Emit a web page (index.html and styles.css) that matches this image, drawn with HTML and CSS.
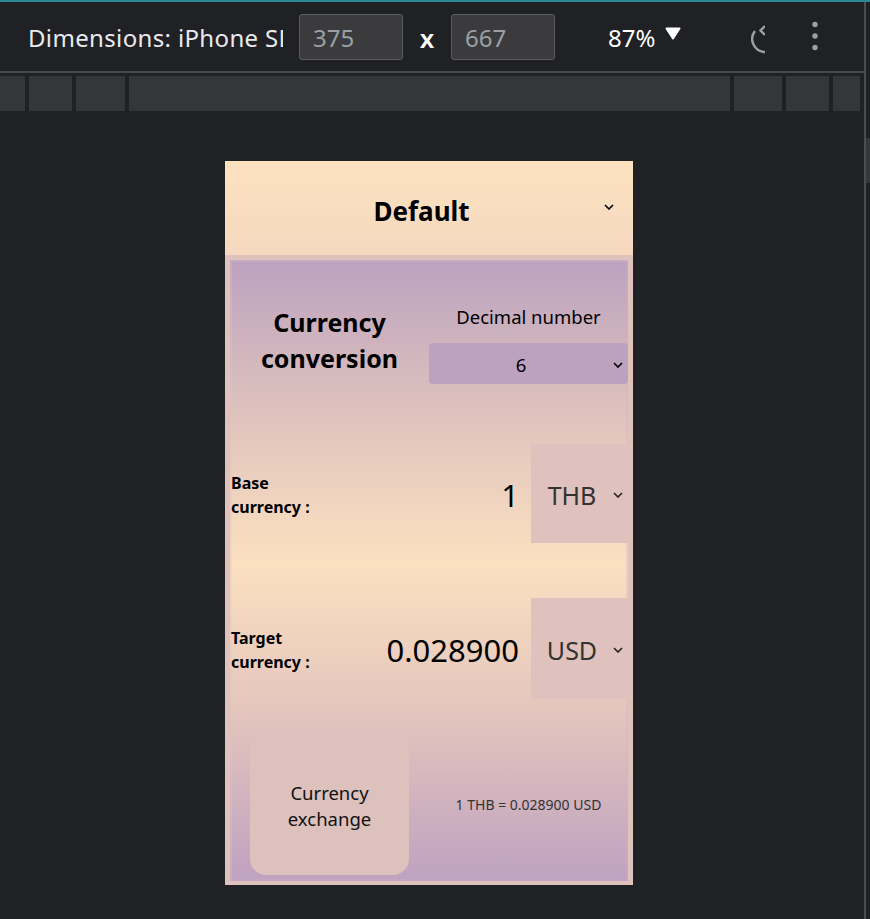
FILE: index.html
```html
<!DOCTYPE html>
<html lang="en">
<head>
<meta charset="utf-8">
<title>Currency conversion – device preview</title>
<link rel="stylesheet" href="styles.css">
</head>
<body>
<div class="frame">
  <div class="topline"></div>
  <div class="content">
    <div class="main">
      <div class="toolbar">
        <div class="dim-label">Dimensions: iPhone SE</div>
        <div class="num-box">375</div>
        <div class="times">x</div>
        <div class="num-box">667</div>
        <div class="zoom-level">87%</div>
        <svg class="zoom-caret" width="16" height="13" viewBox="0 0 16 13"><path d="M1.5 1.5 H14.5 L8 11.5 Z" fill="#ffffff" stroke="#ffffff" stroke-width="2" stroke-linejoin="round"/></svg>
        <div class="rotate-clip">
          <svg width="14" height="30" viewBox="0 0 14 30"><path d="M4 7 A13 13 0 0 0 14 28" fill="none" stroke="#9aa0a6" stroke-width="2.4"/><path d="M14 2 L9.5 6.5 L14 11" fill="none" stroke="#9aa0a6" stroke-width="2.4"/></svg>
        </div>
        <svg class="kebab" width="8" height="30" viewBox="0 0 8 30"><circle cx="4" cy="3.5" r="2.7" fill="#9aa0a6"/><circle cx="4" cy="15" r="2.7" fill="#9aa0a6"/><circle cx="4" cy="26.5" r="2.7" fill="#9aa0a6"/></svg>
      </div>
      <div class="sep"></div>
      <div class="ruler">
        <div class="seg w25"></div>
        <div class="seg w43"></div>
        <div class="seg w49"></div>
        <div class="seg w601"></div>
        <div class="seg w48"></div>
        <div class="seg w43"></div>
        <div class="seg w27"></div>
      </div>
      <div class="stage">
        <div class="phone">
          <header class="ph-head">
            <span class="ph-title">Default</span>
            <svg class="chev head-chev" width="10" height="6" viewBox="0 0 10 6"><polyline points="1,1 5,5 9,1" fill="none" stroke="#000" stroke-width="1.6"/></svg>
          </header>
          <div class="ph-body">
            <div class="panel">
              <div class="row-top">
                <h1 class="conv-title">Currency<br>conversion</h1>
                <div class="decimal">
                  <div class="dec-label">Decimal number</div>
                  <div class="dec-select">
                    <span class="sel-text">6</span>
                    <svg class="chev" width="10" height="6" viewBox="0 0 10 6"><polyline points="1,1 5,5 9,1" fill="none" stroke="#000" stroke-width="1.7"/></svg>
                  </div>
                </div>
              </div>
              <div class="cur-row base">
                <div class="cur-label">Base currency :</div>
                <div class="cur-value">1</div>
                <div class="cur-select">
                  <span class="sel-text">THB</span>
                  <svg class="chev" width="10" height="6" viewBox="0 0 10 6"><polyline points="1,1 5,5 9,1" fill="none" stroke="#222" stroke-width="1.6"/></svg>
                </div>
              </div>
              <div class="cur-row target">
                <div class="cur-label">Target currency :</div>
                <div class="cur-value">0.028900</div>
                <div class="cur-select">
                  <span class="sel-text">USD</span>
                  <svg class="chev" width="10" height="6" viewBox="0 0 10 6"><polyline points="1,1 5,5 9,1" fill="none" stroke="#222" stroke-width="1.6"/></svg>
                </div>
              </div>
              <div class="row-bottom">
                <div class="btn-cell"><div class="exchange-btn">Currency<br>exchange</div></div>
                <div class="rate">1 THB = 0.028900 USD</div>
              </div>
            </div>
          </div>
        </div>
      </div>
    </div>
    <div class="vline"></div>
    <div class="edge">
      <div class="edge-gap1"></div>
      <div class="edge-block"></div>
    </div>
  </div>
</div>
</body>
</html>
```

FILE: styles.css
```css
* { box-sizing: border-box; }

html, body {
  margin: 0;
  padding: 0;
  background: #202124;
  height: 100%;
  overflow: hidden;
}

body {
  font-family: "Noto Sans", "Open Sans", sans-serif;
}

.frame {
  display: flex;
  flex-direction: column;
  height: 919px;
}

.topline {
  height: 2px;
  background: #2e8a92;
  flex: none;
}

.content {
  display: flex;
  flex: 1;
}

.main {
  width: 864px;
  flex: none;
}

.vline {
  width: 2px;
  background: #4a4c50;
  flex: none;
}

.edge {
  width: 4px;
  flex: none;
  display: flex;
  flex-direction: column;
}

.edge-gap1 { height: 136px; }
.edge-block { height: 45px; background: #36373b; }

/* toolbar */
.toolbar {
  height: 69px;
  display: flex;
  align-items: center;
  color: #e8eaed;
  font-size: 24px;
}

.dim-label {
  margin-left: 28px;
  width: 255px;
  white-space: nowrap;
  overflow: hidden;
  letter-spacing: 0.35px;
  padding-top: 2px;
}

.num-box {
  margin-left: 16px;
  width: 104px;
  height: 46px;
  border: 1px solid #5b5d61;
  border-radius: 3px;
  background: #3b3b3d;
  color: #9aa0a6;
  padding-left: 13px;
  display: flex;
  align-items: center;
  padding-top: 2px;
}

.times + .num-box { margin-left: 0; }

.times {
  width: 48px;
  text-align: center;
  font-size: 26px;
  font-weight: 600;
  color: #ffffff;
  padding-top: 2px;
}

.zoom-level {
  margin-left: 53px;
  color: #ffffff;
  padding-top: 2px;
}

.zoom-caret {
  margin-left: 10px;
  margin-top: -6px;
}

.rotate-clip {
  margin-left: 70px;
  width: 14px;
  height: 30px;
  overflow: hidden;
  margin-top: 4px;
}

.kebab {
  margin-left: 46px;
  margin-top: -1px;
}

.sep {
  height: 2px;
  background: #46484c;
}

.ruler {
  margin-top: 3px;
  height: 35px;
  display: flex;
  gap: 4px;
}

.seg { background: #35363a; height: 35px; }
.w25 { width: 25px; }
.w43 { width: 43px; }
.w49 { width: 49px; }
.w601 { width: 601px; }
.w48 { width: 48px; }
.w27 { width: 27px; }

/* stage + phone */
.stage {
  padding-top: 50px;
  padding-left: 225px;
}

.phone {
  width: 408px;
  height: 724px;
  display: flex;
  flex-direction: column;
  color: #000;
}

.ph-head {
  position: relative;
  height: 94px;
  flex: none;
  background: linear-gradient(to bottom, #fde2c0, #f5d8bf);
  display: flex;
  align-items: center;
  justify-content: center;
  padding-right: 15px;
  padding-top: 5px;
}

.ph-title {
  font-size: 26px;
  font-weight: 700;
}

.chev {
  position: absolute;
  right: 5px;
  top: 50%;
  margin-top: -2px;
}

.head-chev {
  right: 19px;
  margin-top: -4px;
}

.ph-body {
  flex: 1;
  background: #dfc2bc;
  padding: 5px 5px 4px 5px;
  display: flex;
}

.panel {
  flex: 1;
  background: linear-gradient(to bottom, #bca2bf 0%, #e0c4bd 26%, #fce0c0 49%, #e4c6bd 72%, #bfa2c0 100%);
  box-shadow: inset 2px 2px 0 rgba(222, 194, 200, 0.3), inset -2px -2px 0 rgba(210, 176, 196, 0.3);
  display: flex;
  flex-direction: column;
}

.row-top {
  height: 184px;
  display: grid;
  grid-template-columns: 199px 199px;
  padding-top: 44px;
  align-items: start;
}

.conv-title {
  margin: 0;
  font-size: 25px;
  font-weight: 700;
  line-height: 36px;
  text-align: center;
}

.decimal {
  display: flex;
  flex-direction: column;
}

.dec-label {
  font-size: 18.5px;
  line-height: 26px;
  text-align: center;
}

.dec-select {
  position: relative;
  margin-top: 13px;
  height: 41px;
  background: #bda2bf;
  border-radius: 4px;
  display: flex;
  align-items: center;
  justify-content: center;
  padding-right: 15px;
  font-size: 18.5px;
  padding-top: 2px;
}

.cur-row {
  display: flex;
  align-items: center;
}

.cur-row.base { height: 99px; }
.cur-row.target { height: 101px; margin-top: 55px; }

.cur-label {
  width: 92px;
  margin-left: 1px;
  font-size: 16px;
  font-weight: 700;
  line-height: 24px;
  padding-top: 2px;
}

.cur-value {
  flex: 1;
  text-align: right;
  padding-right: 12px;
  font-size: 31px;
  line-height: 40px;
  padding-top: 3px;
}

.cur-select {
  position: relative;
  width: 97px;
  align-self: stretch;
  background: #dfc2bd;
  display: flex;
  align-items: center;
  justify-content: center;
  padding-right: 15px;
  font-size: 25px;
  color: #333;
  padding-top: 2px;
}

.row-bottom {
  display: grid;
  grid-template-columns: 199px 199px;
  align-items: center;
  padding-top: 32px;
}

.btn-cell {
  padding-left: 20px;
}

.exchange-btn {
  width: 159px;
  height: 144px;
  border-radius: 16px;
  background: #dcc1bd;
  display: flex;
  align-items: center;
  justify-content: center;
  text-align: center;
  font-size: 18.5px;
  line-height: 26px;
  color: #111;
  padding-top: 6px;
}

.rate {
  text-align: center;
  font-size: 14px;
  color: #333;
  padding-top: 2px;
}
```
